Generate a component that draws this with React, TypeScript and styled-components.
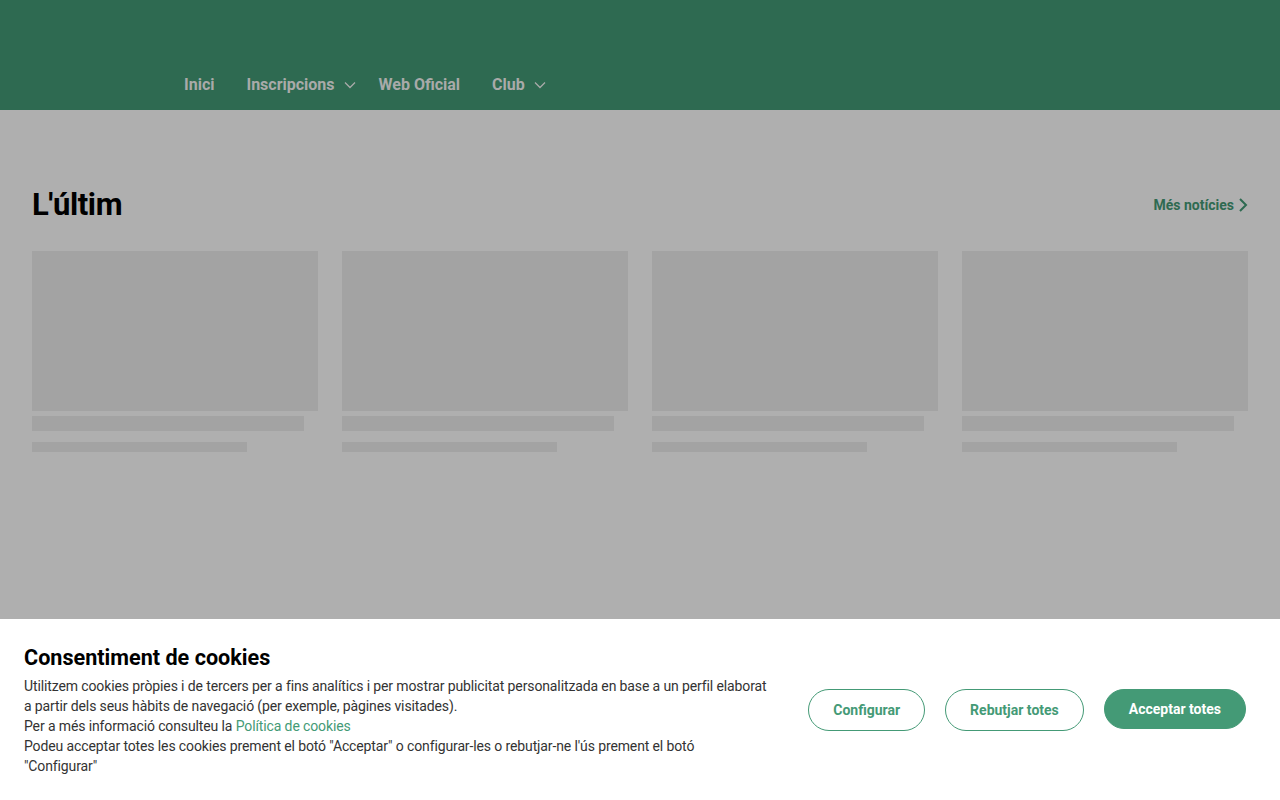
import React from 'react';
import styled, { createGlobalStyle } from 'styled-components';

const GlobalStyle = createGlobalStyle`
  html, body {
    margin: 0;
    padding: 0;
    height: 100%;
  }
  body {
    font-family: Roboto, "Liberation Sans", Arial, sans-serif;
    background: #afafaf;
    overflow: hidden;
  }
  * {
    box-sizing: border-box;
  }
`;

const Page = styled.div`
  height: 800px;
  display: flex;
  flex-direction: column;
`;

const Header = styled.header`
  height: 110px;
  background: #2e6a51;
  display: flex;
  align-items: flex-end;
  padding: 0 0 13px 168px;
`;

const Nav = styled.nav`
  display: flex;
  align-items: center;
`;

const NavItem = styled.a`
  display: flex;
  align-items: center;
  gap: 9px;
  padding: 0 16px;
  color: #a9aaa9;
  font-size: 16px;
  font-weight: 700;
  line-height: 24px;
  text-decoration: none;

  svg {
    margin-right: -9px;
  }
`;

const Main = styled.main`
  flex: 1;
  padding: 76px 32px 0;
`;

const SectionHead = styled.div`
  display: flex;
  align-items: center;
  justify-content: space-between;
  height: 36px;
  margin-bottom: 29px;
`;

const Title = styled.h2`
  margin: 0;
  font-size: 31px;
  font-weight: 700;
  color: #000;
  letter-spacing: -0.4px;
`;

const MoreLink = styled.a`
  display: flex;
  align-items: center;
  gap: 4px;
  color: #2e6a51;
  font-size: 14px;
  font-weight: 700;
  text-decoration: none;
  margin-top: 2px;
`;

const Grid = styled.div`
  display: grid;
  grid-template-columns: repeat(4, 1fr);
  gap: 24px;
`;

const Card = styled.div`
  display: flex;
  flex-direction: column;
`;

const Bone = styled.div<{ $w: string; $h: number; $mt: number }>`
  background: #a3a3a3;
  width: ${p => p.$w};
  height: ${p => p.$h}px;
  margin-top: ${p => p.$mt}px;
`;

const Banner = styled.div`
  height: 181px;
  background: #fff;
  display: flex;
  align-items: center;
  justify-content: space-between;
  padding: 0 34px 0 24px;
`;

const BannerText = styled.div`
  width: 745px;
`;

const BannerTitle = styled.h3`
  margin: 0 0 4px;
  font-size: 21.6px;
  font-weight: 700;
  color: #000;
  line-height: 28px;
`;

const Para = styled.p`
  margin: 0;
  font-size: 14px;
  line-height: 20px;
  color: #333;
  letter-spacing: -0.12px;
`;

const InlineLink = styled.a`
  color: #449a76;
  text-decoration: none;
`;

const Actions = styled.div`
  display: flex;
  align-items: center;
  gap: 20px;
`;

const Btn = styled.button<{ $primary?: boolean }>`
  height: ${p => (p.$primary ? 40 : 42)}px;
  padding: 0 24px;
  border-radius: 21px;
  border: 1px solid #449a76;
  background: ${p => (p.$primary ? '#449a76' : '#fff')};
  color: ${p => (p.$primary ? '#fff' : '#449a76')};
  font-family: Roboto, "Liberation Sans", Arial, sans-serif;
  font-size: 14px;
  font-weight: 700;
  cursor: pointer;
  margin-top: ${p => (p.$primary ? -2 : 0)}px;
`;

const Chevron = () => (
  <svg width="12" height="8" viewBox="0 0 12 8" fill="none">
    <path d="M1 1.5l5 5 5-5" stroke="#a9aaa9" strokeWidth="1.3" />
  </svg>
);

const cards = [0, 1, 2, 3];

export default function App() {
  return (
    <Page>
      <GlobalStyle />
      <Header>
        <Nav>
          <NavItem href="#">Inici</NavItem>
          <NavItem href="#">
            Inscripcions <Chevron />
          </NavItem>
          <NavItem href="#">Web Oficial</NavItem>
          <NavItem href="#">
            Club <Chevron />
          </NavItem>
        </Nav>
      </Header>
      <Main>
        <SectionHead>
          <Title>L'últim</Title>
          <MoreLink href="#">
            Més notícies
            <svg width="10" height="16" viewBox="0 0 10 16" fill="none">
              <path d="M2 2l6 6-6 6" stroke="#2e6a51" strokeWidth="2" />
            </svg>
          </MoreLink>
        </SectionHead>
        <Grid>
          {cards.map(i => (
            <Card key={i}>
              <Bone $w="100%" $h={160} $mt={0} />
              <Bone $w="95%" $h={15} $mt={5} />
              <Bone $w="75%" $h={10} $mt={11} />
            </Card>
          ))}
        </Grid>
      </Main>
      <Banner>
        <BannerText>
          <BannerTitle>Consentiment de cookies</BannerTitle>
          <Para>
            Utilitzem cookies pròpies i de tercers per a fins analítics i per mostrar publicitat
            personalitzada en base a un perfil elaborat a partir dels seus hàbits de navegació (per
            exemple, pàgines visitades).
          </Para>
          <Para>
            Per a més informació consulteu la <InlineLink href="#">Política de cookies</InlineLink>
          </Para>
          <Para>
            Podeu acceptar totes les cookies prement el botó "Acceptar" o configurar-les o
            rebutjar-ne l'ús prement el botó "Configurar"
          </Para>
        </BannerText>
        <Actions>
          <Btn>Configurar</Btn>
          <Btn>Rebutjar totes</Btn>
          <Btn $primary>Acceptar totes</Btn>
        </Actions>
      </Banner>
    </Page>
  );
}
